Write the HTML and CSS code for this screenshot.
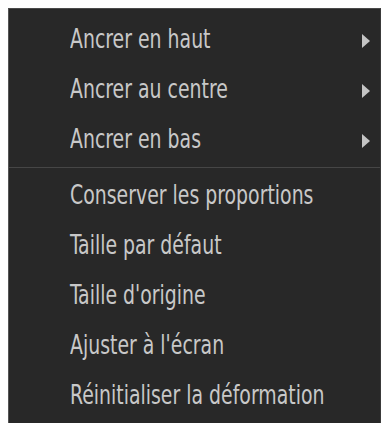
FILE: index.html
```html
<!DOCTYPE html>
<html lang="fr">
<head>
<meta charset="utf-8">
<link rel="stylesheet" href="styles.css">
</head>
<body>
<div class="menu">
  <div class="item has-sub"><span class="label">Ancrer en haut</span><span class="arrow"></span></div>
  <div class="item has-sub"><span class="label">Ancrer au centre</span><span class="arrow"></span></div>
  <div class="item has-sub"><span class="label">Ancrer en bas</span><span class="arrow"></span></div>
  <div class="sep"></div>
  <div class="item"><span class="label">Conserver les proportions</span></div>
  <div class="item"><span class="label">Taille par défaut</span></div>
  <div class="item"><span class="label">Taille d'origine</span></div>
  <div class="item"><span class="label">Ajuster à l'écran</span></div>
  <div class="item"><span class="label">Réinitialiser la déformation</span></div>
</div>
</body>
</html>
```
FILE: styles.css
```css
html, body {
  height: 100%;
}
body {
  margin: 0;
  padding: 8px 1px 0 8px;
  box-sizing: border-box;
  background: #ffffff;
  overflow: hidden;
  font-family: "DejaVu Sans Condensed", "DejaVu Sans", sans-serif;
  font-stretch: condensed;
}
.menu {
  height: 100%;
  box-sizing: border-box;
  background: #282828;
  border-top: 1px solid #4a4a4a;
  border-left: 1px solid #555555;
  border-right: 1px solid #3a3a3a;
  padding-top: 5px;
}
.item {
  display: flex;
  align-items: center;
  height: 50px;
  line-height: 50px;
  padding-left: 61px;
  padding-right: 10px;
  color: #c8c8c8;
  font-size: 21px;
}
.label {
  flex: 1;
  white-space: nowrap;
  transform: scaleY(1.3);
  transform-origin: 0 50%;
}
.arrow {
  width: 0;
  height: 0;
  border-top: 7px solid transparent;
  border-bottom: 7px solid transparent;
  border-left: 8px solid #c4c4c4;
  margin-top: 4px;
}
.sep {
  height: 1px;
  background: #464646;
  margin: 3px 0 2px;
}
```
